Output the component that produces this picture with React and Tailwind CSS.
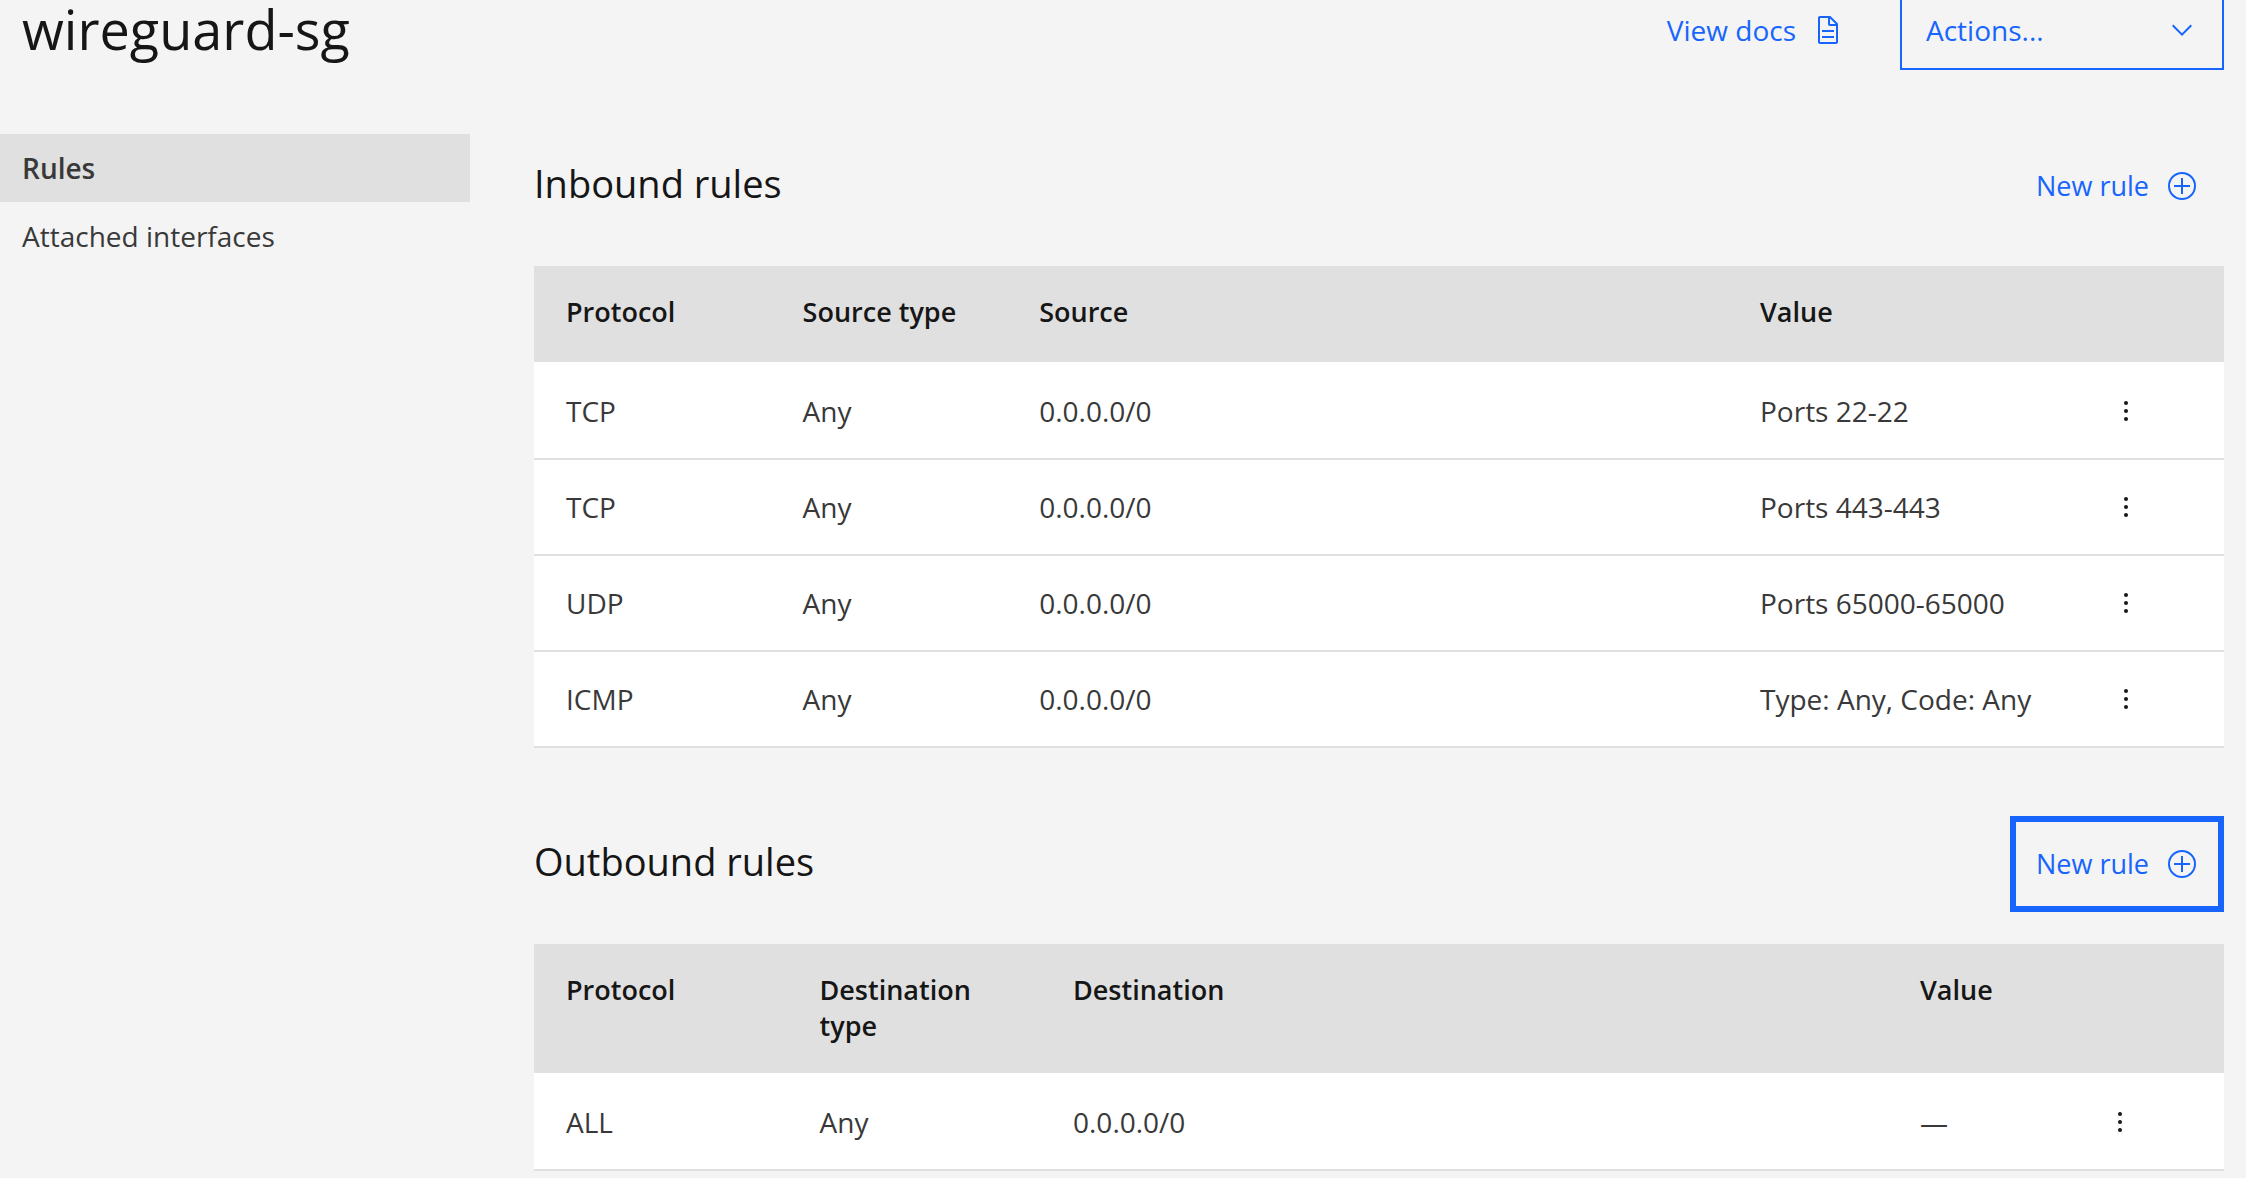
import React from "react";

function DocumentIcon() {
  return (
    <svg viewBox="0 0 32 32" className="size-8 shrink-0 fill-current" aria-hidden="true">
      <path d="M25.7 9.3l-7-7C18.5 2.1 18.3 2 18 2H8C6.9 2 6 2.9 6 4v24c0 1.1.9 2 2 2h16c1.1 0 2-.9 2-2V10c0-.3-.1-.5-.3-.7zM18 4.4l5.6 5.6H18V4.4zM24 28H8V4h8v6c0 1.1.9 2 2 2h6v16z" />
      <path d="M10 22h12v2H10zM10 16h12v2H10z" />
    </svg>
  );
}

function ChevronDownIcon() {
  return (
    <svg
      viewBox="0 0 16 16"
      className="pointer-events-none col-start-1 row-start-1 mt-3.5 mr-[26px] size-8 self-start justify-self-end fill-[#1865fd]"
      aria-hidden="true"
    >
      <path d="M8 11L3 6l.7-.7L8 9.6l4.3-4.3.7.7z" />
    </svg>
  );
}

function AddIcon() {
  return (
    <svg viewBox="0 0 32 32" className="size-8 shrink-0 fill-none stroke-current stroke-2" aria-hidden="true">
      <circle cx="16" cy="16" r="13" />
      <path d="M16 8v16M8 16h16" />
    </svg>
  );
}

function OverflowIcon() {
  return (
    <svg viewBox="0 0 32 32" className="size-8 fill-[#161616]" aria-hidden="true">
      <circle cx="16" cy="8" r="2" />
      <circle cx="16" cy="16" r="2" />
      <circle cx="16" cy="24" r="2" />
    </svg>
  );
}

function NewRuleButton({ focused, label }) {
  return (
    <button
      type="button"
      aria-label={label}
      className={
        "flex h-24 w-[214px] items-center justify-between border-6 px-5 text-[27px] leading-9 text-[#1865fd] " +
        (focused ? "border-[#1865fd]" : "border-transparent")
      }
    >
      New rule
      <AddIcon />
    </button>
  );
}

function RulesSection({ title, columns, rows, focused }) {
  return (
    <section>
      <div className="mb-8 flex items-start justify-between">
        <h2 className="pt-5 text-[38px] leading-[50px] text-[#161616]">{title}</h2>
        <NewRuleButton focused={focused} label={"New rule, " + title} />
      </div>
      <table className="w-full table-fixed text-left" aria-label={title}>
        <colgroup>
          {columns.map((column) => (
            <col key={column.name} className={column.width} />
          ))}
          <col className={focused ? "w-[152px]" : "w-[146px]"} />
        </colgroup>
        <thead className="bg-[#e0e0e0] text-[27px] text-[#161616]">
          <tr className="h-[97px]">
            {columns.map((column) => (
              <th
                key={column.name}
                scope="col"
                className="pt-7 pr-8 pb-[29px] pl-8 align-top leading-9 font-semibold"
              >
                {column.name}
              </th>
            ))}
            <td />
          </tr>
        </thead>
        <tbody className="border-t-2 border-white bg-white text-[28px] text-[#393939]">
          {rows.map((row, i) => (
            <tr key={i} className="h-24 border-b-2 border-[#e0e0e0]">
              {row.map((cell, j) => (
                <td key={j} className="pl-8 leading-9 whitespace-nowrap">
                  {cell}
                </td>
              ))}
              <td className="pl-8">
                <button type="button" aria-label={"Options for " + row[0] + " " + row[3]} className="block">
                  <OverflowIcon />
                </button>
              </td>
            </tr>
          ))}
        </tbody>
      </table>
    </section>
  );
}

const inboundColumns = [
  { name: "Protocol", width: "w-[14%]" },
  { name: "Source type", width: "w-[14%]" },
  { name: "Source", width: "w-auto" },
  { name: "Value", width: "w-[350px]" },
];

const inboundRows = [
  ["TCP", "Any", "0.0.0.0/0", "Ports 22-22"],
  ["TCP", "Any", "0.0.0.0/0", "Ports 443-443"],
  ["UDP", "Any", "0.0.0.0/0", "Ports 65000-65000"],
  ["ICMP", "Any", "0.0.0.0/0", "Type: Any, Code: Any"],
];

const outboundColumns = [
  { name: "Protocol", width: "w-[15%]" },
  { name: "Destination type", width: "w-[15%]" },
  { name: "Destination", width: "w-auto" },
  { name: "Value", width: "w-[184px]" },
];

const outboundRows = [["ALL", "Any", "0.0.0.0/0", "—"]];

export default function App() {
  return (
    <div className="min-h-screen bg-[#f4f4f4] pb-2 font-['Open_Sans',sans-serif]">
      <header className="flex h-[134px] items-start justify-between px-[22px]">
        <h1 className="text-[54px] leading-[58px] text-[#161616]">wireguard-sg</h1>
        <div className="flex items-start gap-14 text-[28px] leading-9 text-[#1865fd]">
          <a href="#docs" className="mt-3 flex items-center gap-4">
            View docs
            <DocumentIcon />
          </a>
          <div className="grid w-[324px]">
            <select
              aria-label="Actions"
              className="col-start-1 row-start-1 h-[70px] appearance-none border-2 border-t-0 border-[#1865fd] bg-transparent pr-16 pb-2 pl-6"
            >
              <option>Actions...</option>
            </select>
            <ChevronDownIcon />
          </div>
        </div>
      </header>

      <div className="flex items-start gap-16 pr-[22px]">
        <nav className="w-[470px] shrink-0 text-[28px] text-[#393939]">
          <a href="#rules" aria-current="page" className="block bg-[#e0e0e0] px-[22px] py-4 leading-9 font-semibold">
            Rules
          </a>
          <a href="#interfaces" className="block px-[22px] py-4 leading-9">
            Attached interfaces
          </a>
        </nav>
        <main className="flex min-w-0 flex-1 flex-col gap-[68px] pt-1">
          <RulesSection title="Inbound rules" columns={inboundColumns} rows={inboundRows} />
          <RulesSection title="Outbound rules" columns={outboundColumns} rows={outboundRows} focused />
        </main>
      </div>
    </div>
  );
}
